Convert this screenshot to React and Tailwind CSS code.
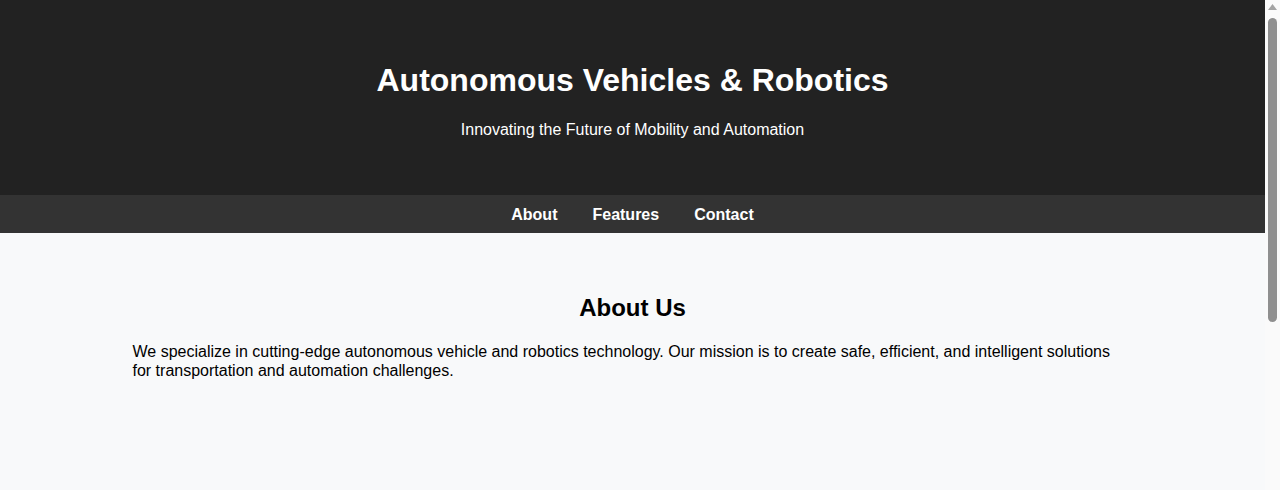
import React from 'react';

const links = ['About', 'Features', 'Contact'];

// Classic page scrollbar gutter as seen in the screenshot
const ScrollGutter = () => (
  <div className="w-[15px] shrink-0 bg-[#fafafa] flex flex-col items-center">
    <svg width="9" height="6" viewBox="0 0 9 6" className="mt-[4px]">
      <polygon points="4.5,0 9,6 0,6" fill="#a3a3a3" />
    </svg>
    <div className="mt-[8px] w-[9px] h-[304px] rounded-full bg-[#8f8f8f]" />
  </div>
);

export default function App() {
  return (
    <div className="h-screen overflow-hidden flex bg-[#f8f9fa] text-black font-['Liberation_Sans',Arial,sans-serif]">
      <div className="flex-1 min-w-0">
        {/* Hero header */}
        <header className="bg-[#222222] text-white text-center pt-[41px] pb-10">
          <h1 className="text-[32px] leading-[37px] font-bold my-[21.44px]">
            Autonomous Vehicles &amp; Robotics
          </h1>
          <p className="text-base leading-[18.4px] my-4">
            Innovating the Future of Mobility and Automation
          </p>
        </header>

        {/* Navigation */}
        <nav className="bg-[#333333] pt-[11px] pb-[8px] flex justify-center gap-[35px]">
          {links.map((link) => (
            <a
              key={link}
              href={`#${link.toLowerCase()}`}
              className="text-white font-bold text-base leading-[18.4px]"
            >
              {link}
            </a>
          ))}
        </nav>

        {/* About section */}
        <main className="max-w-[1000px] mx-auto pt-[41px] pb-10">
          <section id="about">
            <h2 className="text-center text-2xl leading-[27.6px] font-bold mt-5 mb-[22px]">
              About Us
            </h2>
            <p className="text-base leading-[18.4px] my-4">
              We specialize in cutting-edge autonomous vehicle and robotics technology. Our mission is to create safe,
              efficient, and intelligent solutions for transportation and automation challenges.
            </p>
          </section>
        </main>
      </div>
      <ScrollGutter />
    </div>
  );
}
